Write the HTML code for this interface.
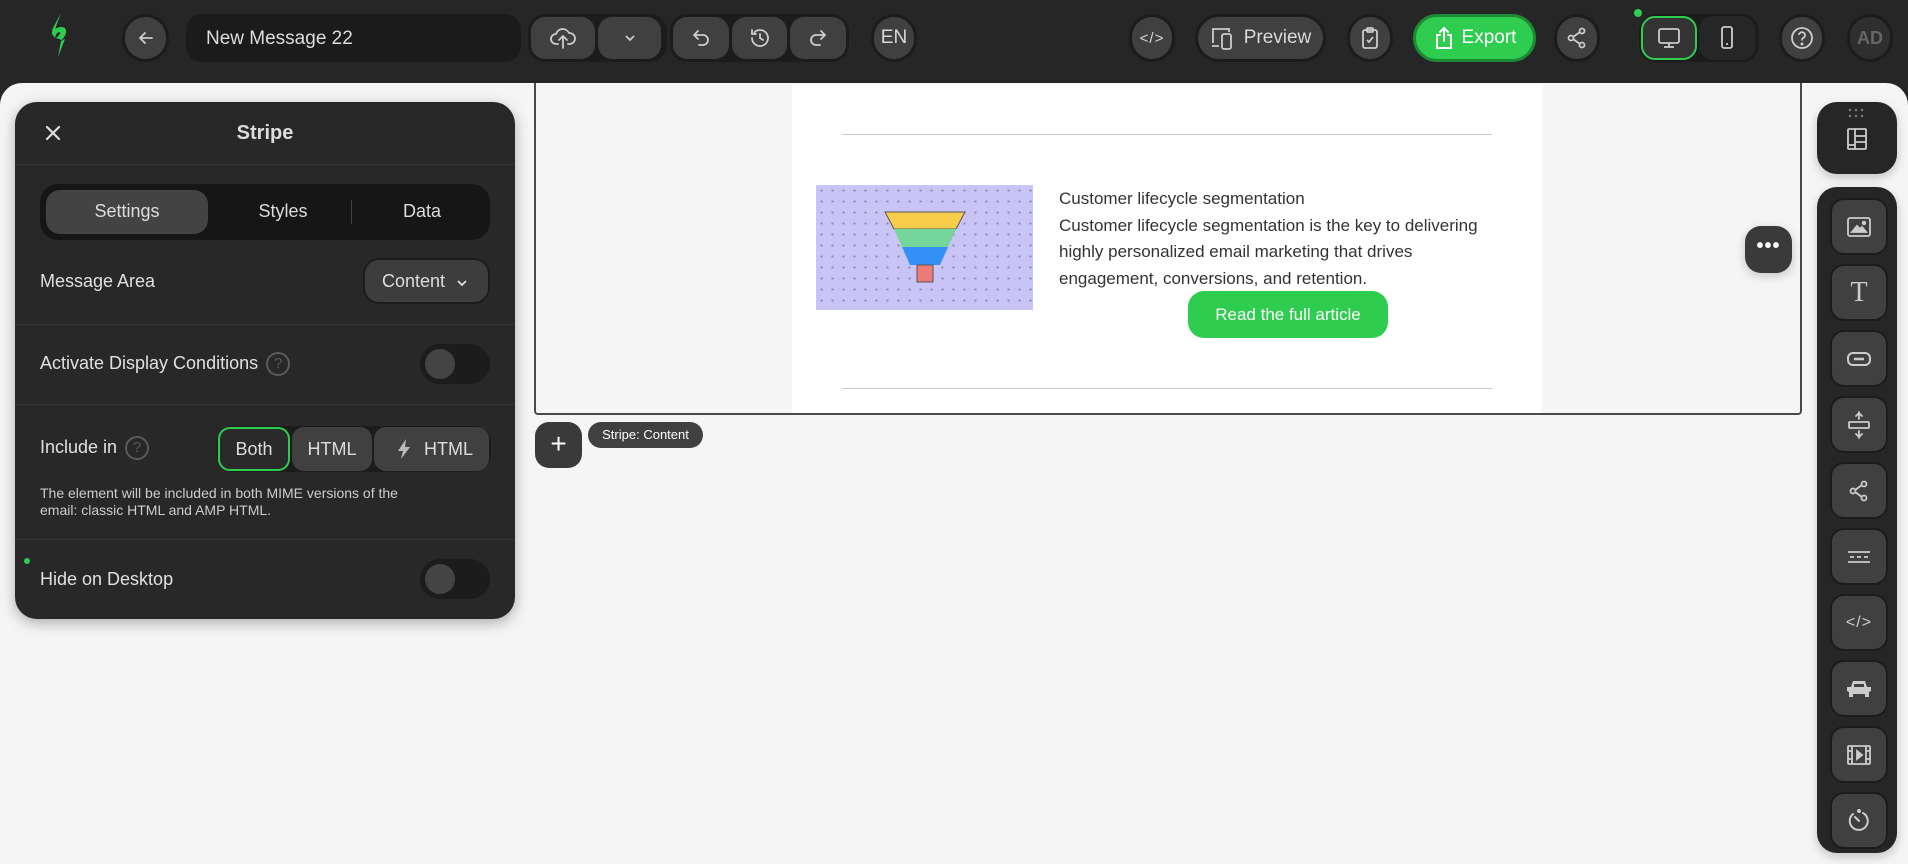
<!DOCTYPE html>
<html><head><meta charset="utf-8"><style>
*{box-sizing:border-box;margin:0;padding:0}
body{width:1908px;height:864px;background:#262626;font-family:"Liberation Sans",sans-serif;position:relative;overflow:hidden;color:#e8e8e8}
.abs{position:absolute}
.main{position:absolute;left:0;top:83px;width:1908px;height:781px;background:#f5f5f5;border-radius:22px 22px 0 0}
.btn{position:absolute;top:14px;height:48px;background:#404040;border:3px solid #1c1c1c;border-radius:16px;display:flex;align-items:center;justify-content:center;color:#d8d8d8;font-size:19px}
.grp{position:absolute;top:14px;height:48px;background:#1c1c1c;border-radius:17px;display:flex;padding:3px;gap:3px}
.grp>div{background:#404040;border-radius:14px;display:flex;align-items:center;justify-content:center;height:42px}
svg{display:block}
.panel{position:absolute;left:15px;top:102px;width:500px;height:517px;background:#282828;border-radius:22px;box-shadow:0 4px 14px rgba(0,0,0,.3)}
.div{position:absolute;left:0;width:500px;height:1px;background:#363636}
.lbl{position:absolute;left:25px;font-size:18px;color:#e0e0e0}
.tog{position:absolute;left:405px;width:70px;height:40px;border-radius:20px;background:#1c1c1c}
.tog:after{content:"";position:absolute;left:5px;top:5px;width:30px;height:30px;border-radius:50%;background:#444}
.q{display:inline-block;width:24px;height:24px;border:2px solid #5a5a5a;border-radius:50%;color:#5a5a5a;font-size:15px;text-align:center;line-height:20px;vertical-align:middle;margin-left:8px}
.sb{position:absolute;left:1830px;width:58px;height:57px;background:#404040;border:2px solid #1c1c1c;border-radius:14px;display:flex;align-items:center;justify-content:center}
</style></head><body>
<div class="main"></div>
<svg class="abs" style="left:44px;top:10px" width="30" height="50" viewBox="0 0 30 50"><path d="M17 3 L8 20 L10 22 Z" fill="#2ecc4f"/><path d="M8 24 Q7 20 13 18 Q20 15 22 20 Q23 24 18 30 L12 28 Q17 24 16 22 Q12 22 11 28 Z" fill="#2ecc4f"/><path d="M21 29 L14 47 L17 31 Z" fill="#2ecc4f"/></svg>
<div class="btn" style="left:122px;width:47px;border-radius:24px"><svg width="18" height="18" viewBox="0 0 18 18" fill="none" stroke="#ccc" stroke-width="1.8" stroke-linecap="round"><path d="M15 9H3M8 4L3 9l5 5"/></svg></div>
<div class="abs" style="left:186px;top:14px;width:335px;height:48px;background:#1b1b1b;border-radius:16px;font-size:19px;color:#ddd;padding:14px 20px">New Message 22</div>
<div class="grp" style="left:528px;width:139px"><div style="width:64px"><svg width="26" height="24" viewBox="0 0 26 24" fill="none" stroke="#ccc" stroke-width="1.8" stroke-linecap="round" stroke-linejoin="round"><path d="M8 18H6a5 5 0 0 1 0-10 7 7 0 0 1 13-1 5 5 0 0 1 1 11h-2"/><path d="M13 22V11M9 14l4-4 4 4"/></svg></div><div style="width:63px"><svg width="14" height="10" viewBox="0 0 14 10" fill="none" stroke="#ccc" stroke-width="1.8"><path d="M3 3l4 4 4-4"/></svg></div></div>
<div class="grp" style="left:670px;width:179px"><div style="width:56px"><svg width="22" height="20" viewBox="0 0 22 20" fill="none" stroke="#ccc" stroke-width="1.8" stroke-linecap="round"><path d="M8 3L4 7l4 4M4 7h9a5 5 0 0 1 0 10H9"/></svg></div><div style="width:56px"><svg width="24" height="24" viewBox="0 0 24 24" fill="none" stroke="#ccc" stroke-width="1.8" stroke-linecap="round"><path d="M4 12a8 8 0 1 0 2.5-5.8M4 4v4h4M12 8v4l3 2"/></svg></div><div style="width:56px"><svg width="22" height="20" viewBox="0 0 22 20" fill="none" stroke="#ccc" stroke-width="1.8" stroke-linecap="round"><path d="M14 3l4 4-4 4M18 7H9a5 5 0 0 0 0 10h4"/></svg></div></div>
<div class="btn" style="left:871px;width:46px;border-radius:24px">EN</div>
<div class="btn" style="left:1129px;width:46px;border-radius:24px;font-size:15px;letter-spacing:1px">&lt;/&gt;</div>
<div class="btn" style="left:1195px;width:131px;border-radius:24px"><svg width="28" height="26" viewBox="0 0 28 26" fill="none" stroke="#ccc" stroke-width="1.8"><path d="M3 18V4h16v3M2 21h7"/><rect x="12" y="9" width="9" height="15" rx="2"/></svg><span style="margin-left:6px">Preview</span></div>
<div class="btn" style="left:1347px;width:46px;border-radius:24px"><svg width="20" height="24" viewBox="0 0 20 24" fill="none" stroke="#ccc" stroke-width="1.8"><rect x="3" y="4" width="14" height="18" rx="2"/><rect x="7" y="2" width="6" height="4" rx="1"/><path d="M7 14l2 2 4-5"/></svg></div>
<div class="btn" style="left:1413px;width:123px;border-radius:24px;background:#2ecc4f;border-color:#1f8a36;color:#fff"><svg width="22" height="26" viewBox="0 0 22 26" fill="none" stroke="#fff" stroke-width="2" stroke-linecap="round"><path d="M7 10H4v13h14V10h-3M11 16V3M7 7l4-4 4 4"/></svg><span style="margin-left:7px">Export</span></div>
<div class="btn" style="left:1554px;width:46px;border-radius:24px"><svg width="22" height="24" viewBox="0 0 22 24" fill="none" stroke="#ccc" stroke-width="1.8"><circle cx="16" cy="5" r="2.5"/><circle cx="5" cy="12" r="2.5"/><circle cx="16" cy="19" r="2.5"/><path d="M7 11l7-5M7 13l7 5"/></svg></div>
<div class="abs" style="left:1634px;top:9px;width:8px;height:8px;border-radius:50%;background:#2ecc4f"></div>
<div class="grp" style="left:1639px;width:120px;padding:2px;gap:2px"><div style="width:56px;height:44px;border:2px solid #2ecc4f;background:#333"><svg width="26" height="24" viewBox="0 0 26 24" fill="none" stroke="#ccc" stroke-width="1.8"><rect x="3" y="3" width="20" height="14" rx="2"/><path d="M13 17v4M8 21h10"/></svg></div><div style="width:56px;height:44px;background:#262626"><svg width="16" height="26" viewBox="0 0 16 26" fill="none" stroke="#ccc" stroke-width="1.8"><rect x="3" y="2" width="10" height="21" rx="2"/><path d="M7 19h2"/></svg></div></div>
<div class="btn" style="left:1779px;width:46px;border-radius:24px"><svg width="26" height="26" viewBox="0 0 26 26" fill="none" stroke="#ccc" stroke-width="1.8"><circle cx="13" cy="13" r="10"/><path d="M10 10a3 3 0 1 1 4 3c-1 .5-1 1.5-1 2.5"/><circle cx="13" cy="19" r=".6" fill="#ccc"/></svg></div>
<div class="btn" style="left:1847px;width:46px;border-radius:24px;background:#2f2f2f;color:#666;font-weight:bold;font-size:18px">AD</div>

<div class="abs" style="left:534px;top:83px;width:1268px;height:332px;border:2px solid #4a4a4a;border-top:none;border-radius:0 0 4px 4px;background:#f5f5f5"></div>
<div class="abs" style="left:792px;top:84px;width:750px;height:329px;background:#fff"></div>
<div class="abs" style="left:842px;top:134px;width:650px;height:1px;background:#ccc"></div>
<div class="abs" style="left:842px;top:388px;width:650px;height:1px;background:#ccc"></div>
<div class="abs" style="left:816px;top:185px;width:217px;height:125px;background:#c9c4f6;background-image:radial-gradient(#8a86a8 1px,transparent 1.2px);background-size:11px 11px"></div>
<svg class="abs" style="left:882px;top:209px" width="86" height="76" viewBox="0 0 86 76"><path d="M3 3H83L74 20H12Z" fill="#f8cd4a" stroke="#555" stroke-width="1"/><path d="M12 20H74L66 38H20Z" fill="#74d69a"/><path d="M20 38H66L58 56H28Z" fill="#3390f5"/><rect x="35" y="56" width="16" height="17" fill="#ec7a78" stroke="#555" stroke-width="1"/></svg>
<div class="abs" style="left:1059px;top:186px;font-size:17px;line-height:26.5px;color:#333;width:440px">Customer lifecycle segmentation<br>Customer lifecycle segmentation is the key to delivering highly personalized email marketing that drives engagement, conversions, and retention.</div>
<div class="abs" style="left:1188px;top:291px;width:200px;height:47px;border-radius:16px;background:#2ecc4f;color:#fff;font-size:17px;text-align:center;line-height:47px">Read the full article</div>
<div class="abs" style="left:1745px;top:226px;width:47px;height:47px;border-radius:16px;background:#3a3a3a;color:#fff;font-size:20px;text-align:center;line-height:40px;font-weight:bold;letter-spacing:1px;box-shadow:0 3px 10px rgba(0,0,0,.2)">•••</div>
<div class="abs" style="left:535px;top:422px;width:47px;height:46px;border-radius:14px;background:#3a3a3a;color:#fff;font-size:28px;text-align:center;line-height:44px">+</div>
<div class="abs" style="left:588px;top:422px;width:115px;height:26px;border-radius:13px;background:#404040;color:#fff;font-size:13px;text-align:center;line-height:26px">Stripe: Content</div>

<div class="panel">
<svg class="abs" style="left:29px;top:22px" width="18" height="18" viewBox="0 0 18 18" stroke="#ddd" stroke-width="2.2" stroke-linecap="round"><path d="M3 3l12 12M15 3L3 15"/></svg>
<div class="abs" style="left:0;width:500px;top:20px;text-align:center;font-size:20px;font-weight:bold;color:#ddd">Stripe</div>
<div class="div" style="top:62px"></div>
<div class="abs" style="left:25px;top:82px;width:450px;height:56px;background:#161616;border-radius:18px"></div>
<div class="abs" style="left:31px;top:88px;width:162px;height:44px;background:#434343;border-radius:14px"></div>
<div class="abs" style="left:31px;top:88px;width:162px;line-height:42px;text-align:center;font-size:18px;color:#ddd">Settings</div>
<div class="abs" style="left:193px;top:88px;width:150px;line-height:42px;text-align:center;font-size:18px;color:#ddd">Styles</div>
<div class="abs" style="left:336px;top:98px;width:1px;height:24px;background:#444"></div>
<div class="abs" style="left:337px;top:88px;width:140px;line-height:42px;text-align:center;font-size:18px;color:#ddd">Data</div>
<div class="lbl" style="top:169px">Message Area</div>
<div class="abs" style="left:348px;top:156px;width:127px;height:46px;background:#3d3d3d;border:2px solid #1c1c1c;border-radius:16px;font-size:18px;color:#ddd;padding:11px 0 0 17px">Content <svg style="display:inline-block;margin-left:6px" width="12" height="8" viewBox="0 0 12 8" fill="none" stroke="#ddd" stroke-width="1.8"><path d="M2 2l4 4 4-4"/></svg></div>
<div class="div" style="top:222px"></div>
<div class="lbl" style="top:250px">Activate Display Conditions<span class="q">?</span></div>
<div class="tog" style="top:242px"></div>
<div class="div" style="top:302px"></div>
<div class="lbl" style="top:334px">Include in<span class="q">?</span></div>
<div class="abs" style="left:202px;top:324px;width:274px;height:46px;background:#1c1c1c;border-radius:16px"></div>
<div class="abs" style="left:203px;top:325px;width:72px;height:44px;border:2px solid #2ecc4f;border-radius:12px;background:#2a2a2a;color:#ddd;font-size:18px;text-align:center;line-height:40px">Both</div>
<div class="abs" style="left:277px;top:325px;width:80px;height:44px;border-radius:12px;background:#404040;color:#ddd;font-size:18px;text-align:center;line-height:44px">HTML</div>
<div class="abs" style="left:359px;top:325px;width:115px;height:44px;border-radius:12px;background:#404040;color:#ddd;font-size:18px;line-height:44px;padding-left:22px;display:flex;align-items:center"><svg width="16" height="22" viewBox="0 0 16 22"><path d="M10 1L2 13h5l-2 8 9-12H9Z" fill="#bbb"/></svg><span style="margin-left:12px">HTML</span></div>
<div class="abs" style="left:25px;top:383px;width:395px;font-size:14px;line-height:17px;color:#ccc">The element will be included in both MIME versions of the email: classic HTML and AMP HTML.</div>
<div class="div" style="top:437px"></div>
<div class="abs" style="left:9px;top:456px;width:6px;height:6px;border-radius:50%;background:#2ecc4f"></div>
<div class="lbl" style="top:467px">Hide on Desktop</div>
<div class="tog" style="top:457px"></div>
</div>

<div class="abs" style="left:1817px;top:102px;width:80px;height:72px;background:#262626;border-radius:20px;box-shadow:0 4px 10px rgba(0,0,0,.2)"></div>
<svg class="abs" style="left:1847px;top:108px" width="18" height="10" viewBox="0 0 18 10" fill="#777"><circle cx="3" cy="2" r="1.3"/><circle cx="9" cy="2" r="1.3"/><circle cx="15" cy="2" r="1.3"/><circle cx="3" cy="8" r="1.3"/><circle cx="9" cy="8" r="1.3"/><circle cx="15" cy="8" r="1.3"/></svg>
<svg class="abs" style="left:1845px;top:126px" width="24" height="26" viewBox="0 0 24 26" fill="none" stroke="#ccc" stroke-width="1.8"><rect x="3" y="3" width="18" height="20" rx="1"/><path d="M10 3v20M10 10h11M10 16h11M3 19h7"/></svg>
<div class="abs" style="left:1817px;top:187px;width:80px;height:666px;background:#262626;border-radius:20px;box-shadow:0 4px 10px rgba(0,0,0,.2)"></div>
<div class="sb" style="top:198px"><svg width="28" height="24" viewBox="0 0 28 24" fill="none" stroke="#ccc" stroke-width="1.8"><rect x="3" y="3" width="22" height="18" rx="2"/><path d="M7 17l5-6 3 3 2-2 4 5Z" fill="#ccc"/><circle cx="19" cy="8" r="1.3" fill="#ccc"/></svg></div>
<div class="sb" style="top:264px;font-family:'Liberation Serif',serif;font-size:28px;color:#ccc">T</div>
<div class="sb" style="top:330px"><svg width="28" height="20" viewBox="0 0 28 20" fill="none" stroke="#ccc" stroke-width="2"><rect x="3" y="4" width="22" height="12" rx="5"/><path d="M9 10h10" stroke-width="2.5"/></svg></div>
<div class="sb" style="top:396px"><svg width="28" height="30" viewBox="0 0 28 30" fill="none" stroke="#ccc" stroke-width="1.8" stroke-linecap="round"><path d="M14 2v7M11 6l3-3 3 3M14 21v7M11 24l3 3 3-3"/><rect x="4" y="12" width="20" height="6" rx="1"/></svg></div>
<div class="sb" style="top:462px"><svg width="24" height="24" viewBox="0 0 24 24" fill="none" stroke="#ccc" stroke-width="1.8"><circle cx="17" cy="5" r="2.5"/><circle cx="6" cy="12" r="2.5"/><circle cx="17" cy="19" r="2.5"/><path d="M8 11l7-5M8 13l7 5"/></svg></div>
<div class="sb" style="top:528px"><svg width="28" height="16" viewBox="0 0 28 16" fill="none" stroke="#ccc" stroke-width="1.8"><path d="M3 3h22M3 13h22M5 8h4M12 8h4M19 8h4"/></svg></div>
<div class="sb" style="top:594px;color:#ccc;font-size:16px;letter-spacing:1px">&lt;/&gt;</div>
<div class="sb" style="top:660px"><svg width="28" height="22" viewBox="0 0 28 22" fill="#ccc"><path d="M8 3h12l2 6h4v4l-2 1v5h-4v-3H8v3H4v-5l-2-1V9h4Z"/><rect x="9" y="6" width="10" height="3" fill="#404040"/></svg></div>
<div class="sb" style="top:726px"><svg width="28" height="24" viewBox="0 0 28 24" fill="none" stroke="#ccc" stroke-width="1.8"><rect x="3" y="3" width="22" height="18" rx="1"/><path d="M7 3v18M21 3v18M3 8h4M3 16h4M21 8h4M21 16h4"/><path d="M12 8l5 4-5 4Z" fill="#ccc"/></svg></div>
<div class="sb" style="top:792px"><svg width="26" height="26" viewBox="0 0 26 26" fill="none" stroke="#ccc" stroke-width="2" stroke-linecap="round"><path d="M17 5a9 9 0 1 1-10 1"/><path d="M9 9l4 4"/><circle cx="13" cy="3" r="1" fill="#ccc"/></svg></div>
</body></html>
